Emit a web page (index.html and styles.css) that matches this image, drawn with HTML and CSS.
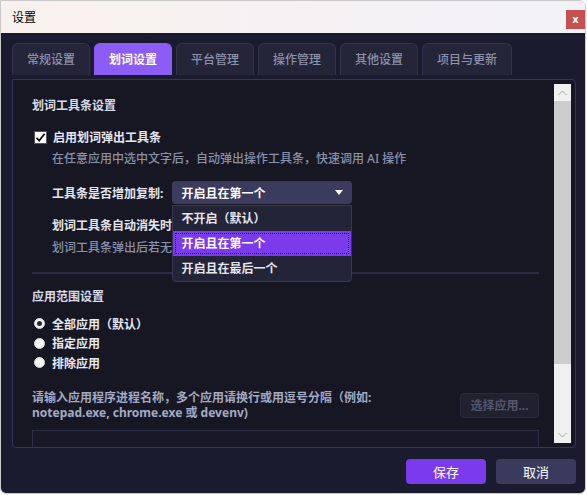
FILE: index.html
```html
<!DOCTYPE html>
<html lang="zh-CN">

<head>
    <meta charset="UTF-8" />
    <meta name="viewport" content="width=device-width, initial-scale=1.0" />
    <title>设置</title>
    <link rel="stylesheet" href="styles.css">
</head>

<body>
    <div class="window">
        <div class="titlebar">
            <span class="title">设置</span>
            <button class="closeButton">x</button>
        </div>

        <div class="main">
            <div class="tabs">
                <div class="tab">常规设置</div>
                <div class="tab active">划词设置</div>
                <div class="tab">平台管理</div>
                <div class="tab">操作管理</div>
                <div class="tab">其他设置</div>
                <div class="tab">项目与更新</div>
            </div>

            <div class="panel">
                <div class="scrollContent">
                    <div class="sectionTitle">划词工具条设置</div>

                    <label class="checkRow">
                        <span class="checkBox">
                            <svg width="11" height="11" viewBox="0 0 11 11">
                                <path d="M1.5 5.8 L4.2 8.6 L9.6 1.8" fill="none" stroke="#111" stroke-width="1.8" />
                            </svg>
                        </span>
                        启用划词弹出工具条
                    </label>
                    <div class="hint indent">在任意应用中选中文字后，自动弹出操作工具条，快速调用 AI 操作</div>

                    <div class="selectRow indent">
                        <span class="label">工具条是否增加复制:</span>
                        <div class="selectWrap">
                            <div class="select">
                                <span>开启且在第一个</span>
                                <span class="arrow"></span>
                            </div>
                            <!-- open dropdown list -->
                            <div class="dropList">
                                <div class="option">不开启（默认）</div>
                                <div class="option selected">开启且在第一个</div>
                                <div class="option">开启且在最后一个</div>
                            </div>
                        </div>
                    </div>

                    <div class="label indent rowLabel">划词工具条自动消失时间</div>
                    <div class="hint indent">划词工具条弹出后若无操作，将在设定时间后自动消失</div>

                    <div class="separator"></div>

                    <div class="sectionTitle">应用范围设置</div>
                    <div class="radioList">
                        <label class="radioRow"><span class="radio checked"></span>全部应用（默认）</label>
                        <label class="radioRow"><span class="radio"></span>指定应用</label>
                        <label class="radioRow"><span class="radio"></span>排除应用</label>
                    </div>

                    <div class="appRow">
                        <div class="appHint">请输入应用程序进程名称，多个应用请换行或用逗号分隔（例如:<br>notepad.exe, chrome.exe 或 devenv)</div>
                        <button class="pickButton">选择应用...</button>
                    </div>
                    <div class="appInput"></div>
                </div>

                <div class="scrollbar">
                    <div class="scrollArrow">
                        <svg width="9" height="6" viewBox="0 0 9 6"><path d="M0.5 5 L4.5 1 L8.5 5" fill="none" stroke="#a3a3a3" stroke-width="1" /></svg>
                    </div>
                    <div class="scrollTrack">
                        <div class="scrollThumb"></div>
                    </div>
                    <div class="scrollArrow">
                        <svg width="9" height="6" viewBox="0 0 9 6"><path d="M0.5 1 L4.5 5 L8.5 1" fill="none" stroke="#a3a3a3" stroke-width="1" /></svg>
                    </div>
                </div>
            </div>

            <div class="footer">
                <button class="saveButton">保存</button>
                <button class="cancelButton">取消</button>
            </div>
        </div>
    </div>
</body>

</html>
```

FILE: styles.css
```css
body {
    margin: 0;
    background-color: #ffffff;
    font-family: "Noto Sans", "Noto Sans CJK SC", sans-serif;
    font-size: 12px;
}

.window {
    width: 586px;
    height: 494px;
    box-sizing: border-box;
    border: 1px solid #c9c9c9;
    border-radius: 0 7px 6px 6px;
    overflow: hidden;
    display: flex;
    flex-direction: column;
}

.titlebar {
    height: 32px;
    flex-shrink: 0;
    display: flex;
    align-items: center;
    justify-content: space-between;
    padding-left: 11px;
    background: linear-gradient(to right, #f9f1ee, #f2f2f8);
}

.title {
    color: #000;
    font-size: 12px;
}

.closeButton {
    align-self: flex-start;
    margin-top: 9px;
    width: 19px;
    height: 19px;
    padding: 0;
    border: none;
    background-color: #c75050;
    color: #fff;
    font-family: "DejaVu Sans", sans-serif;
    font-size: 10px;
    font-weight: bold;
    line-height: 19px;
}

.main {
    flex: 1;
    display: flex;
    flex-direction: column;
    background-color: #1b1b2f;
    padding: 10px 9px 0 11px;
}

/* tabs */
.tabs {
    display: flex;
    gap: 4px;
}

.tab {
    height: 32px;
    box-sizing: border-box;
    padding: 0 14px;
    line-height: 31px;
    border: 1px solid #313152;
    border-bottom: none;
    border-radius: 6px 6px 0 0;
    background-color: #25253a;
    color: #8b91aa;
    font-weight: 500;
}

.tab.active {
    background-color: #8b5cf6;
    border-color: #8b5cf6;
    color: #fff;
    font-weight: bold;
}

/* settings panel */
.panel {
    margin-top: 4px;
    width: 564px;
    height: 369px;
    box-sizing: border-box;
    border: 1px solid #34345a;
    border-radius: 0 4px 4px 4px;
    background-color: #171724;
    display: flex;
}

.scrollContent {
    flex: 1;
    overflow: hidden;
    padding: 17px 15px 0 19px;
}

.sectionTitle {
    line-height: 18px;
    color: #d9dbe8;
    font-weight: bold;
}

.indent {
    margin-left: 20px;
}

.label {
    color: #e4e5ee;
    font-weight: bold;
}

.hint {
    margin-top: 4px;
    line-height: 18px;
    color: #8a91aa;
    font-weight: 500;
}

.checkRow {
    margin-top: 13px;
    height: 18px;
    display: flex;
    align-items: center;
    gap: 6px;
    color: #e6e7f0;
    font-weight: bold;
}

.checkBox {
    width: 11px;
    height: 11px;
    margin-left: 2px;
    border: 1px solid #555;
    background-color: #fff;
    display: flex;
}

.selectRow {
    margin-top: 13px;
    display: flex;
    align-items: center;
    gap: 9px;
}

.selectWrap {
    position: relative;
    width: 180px;
}

.select {
    height: 23px;
    border-radius: 4px;
    background-color: #3b3b5e;
    display: flex;
    align-items: center;
    justify-content: space-between;
    padding: 0 9px;
    color: #fff;
    font-weight: bold;
}

.arrow {
    width: 0;
    height: 0;
    border-left: 4px solid transparent;
    border-right: 4px solid transparent;
    border-top: 5px solid #fff;
}

.dropList {
    position: absolute;
    top: 24px;
    left: 0;
    width: 180px;
    box-sizing: border-box;
    border: 1px solid #36365a;
    border-radius: 0 0 4px 4px;
    background-color: #242438;
    z-index: 2;
}

.option {
    height: 25px;
    line-height: 25px;
    padding-left: 8px;
    color: #e6e7f0;
    font-weight: bold;
}

.option.selected {
    background-color: #7c3aed;
    color: #fff;
    outline: 1px dotted #1c0f3a;
    outline-offset: -3px;
}

.rowLabel {
    margin-top: 13px;
    line-height: 18px;
}

.separator {
    margin-top: 15px;
    height: 2px;
    background-color: #2b2b47;
}

.separator+.sectionTitle {
    margin-top: 14px;
}

.radioList {
    margin-top: 8px;
}

.radioRow {
    height: 19.5px;
    display: flex;
    align-items: center;
    gap: 7px;
    color: #e8e9f2;
    font-weight: bold;
}

.radio {
    width: 11px;
    height: 11px;
    margin-left: 2px;
    box-sizing: border-box;
    border-radius: 50%;
    border: 1px solid #d6d6d6;
    background-color: #f4f4f4;
    display: flex;
    align-items: center;
    justify-content: center;
}

.radio.checked::after {
    content: "";
    width: 5px;
    height: 5px;
    border-radius: 50%;
    background-color: #2a2a2a;
}

.appRow {
    margin-top: 17px;
    display: flex;
    align-items: center;
    justify-content: space-between;
}

.appHint {
    line-height: 15.5px;
    color: #a3aac3;
    font-weight: bold;
}

.pickButton {
    width: 79px;
    height: 25px;
    border: 1px solid #2a2a3e;
    border-radius: 4px;
    background-color: #20202f;
    color: #55576c;
    font-family: inherit;
    font-size: 12px;
    font-weight: bold;
    padding: 0;
}

.appInput {
    margin-top: 9px;
    height: 60px;
    border: 1px solid #2d2d48;
    background-color: #181826;
}

/* classic light scrollbar */
.scrollbar {
    width: 17px;
    margin: 4px 4px 4px 0;
    background-color: #f0f0f0;
    display: flex;
    flex-direction: column;
}

.scrollArrow {
    height: 17px;
    display: flex;
    align-items: center;
    justify-content: center;
}

.scrollTrack {
    flex: 1;
}

.scrollThumb {
    height: 263px;
    background-color: #cdcdcd;
}

/* bottom buttons */
.footer {
    margin-top: 11px;
    display: flex;
    justify-content: flex-end;
    gap: 10px;
}

.saveButton,
.cancelButton {
    width: 80px;
    height: 25px;
    border: none;
    border-radius: 4px;
    color: #fff;
    font-family: inherit;
    font-size: 13px;
    padding: 0;
}

.saveButton {
    background-color: #7c3aed;
}

.cancelButton {
    background-color: #3a3a5c;
}
```
